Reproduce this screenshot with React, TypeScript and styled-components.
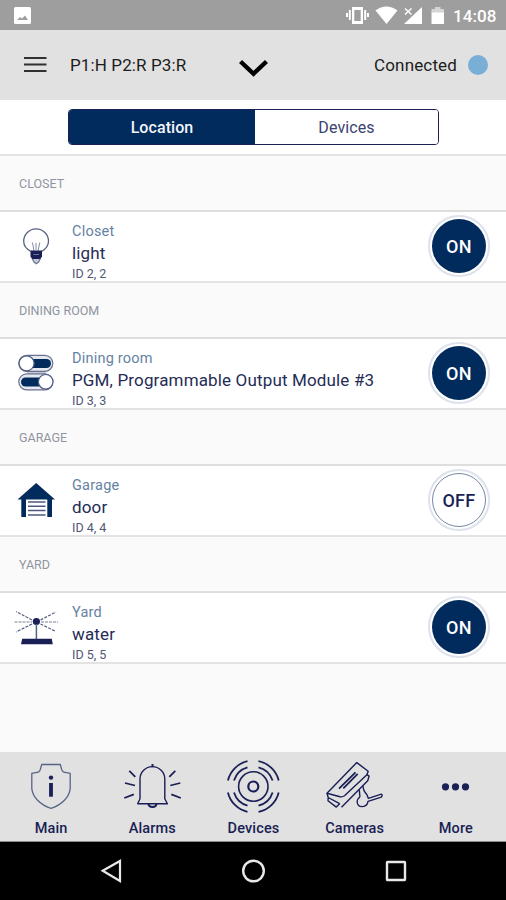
import React from 'react';
import styled, { createGlobalStyle } from 'styled-components';

const NAVY = '#002b5c';
const INK = '#1a1f55';

const GlobalStyle = createGlobalStyle`
  * { box-sizing: border-box; }
  body { margin: 0; background: #fafafa; font-family: Roboto, "Liberation Sans", sans-serif; }
  svg { display: block; flex: none; }
`;

const Screen = styled.div`
  width: 506px;
  height: 900px;
  display: flex;
  flex-direction: column;
  overflow: hidden;
  background: #fafafa;
`;

const StatusBar = styled.div`
  height: 30px;
  flex: none;
  display: flex;
  align-items: center;
  justify-content: space-between;
  padding: 0 9px 0 14px;
  background: #9e9e9e;
  color: #fff;
`;

const StatusIcons = styled.div`
  display: flex;
  align-items: center;
`;

const Clock = styled.span`
  width: 44px;
  margin-left: 7px;
  font-size: 17px;
  font-weight: 500;
  line-height: 30px;
  letter-spacing: 0.1px;
  white-space: nowrap;
  padding-top: 2px;
`;

const Header = styled.header`
  height: 70px;
  flex: none;
  display: grid;
  grid-template-columns: 70px 169px 30px 1fr 20px;
  align-items: center;
  padding-right: 18px;
  background: #e1e1e1;
  color: #1c1c1c;
`;

const Partitions = styled.span`
  font-size: 17px;
  letter-spacing: 0.12px;
`;

const Connection = styled.span`
  font-size: 17px;
  letter-spacing: 0.15px;
  text-align: right;
  padding-right: 11px;
`;

const StatusDot = styled.span`
  width: 20px;
  height: 20px;
  border-radius: 50%;
  background: #79aed6;
`;

const TabArea = styled.div`
  height: 54px;
  flex: none;
  padding: 9px 67px 0 68px;
  background: #fff;
`;

const Tabs = styled.div`
  height: 36px;
  display: grid;
  grid-template-columns: 186px 1fr;
  border: 1px solid ${INK};
  border-radius: 4px;
  overflow: hidden;
`;

const Tab = styled.button<{ $active?: boolean }>`
  border: 0;
  padding: 0;
  font: ${({ $active }) => ($active ? 500 : 400)} 16px Roboto, sans-serif;
  letter-spacing: ${({ $active }) => ($active ? '0.08px' : '0.1px')};
  color: ${({ $active }) => ($active ? '#f2f4fa' : '#3a4272')};
  background: ${({ $active }) => ($active ? NAVY : '#fff')};
`;

const List = styled.main`
  flex: 1;
`;

const SectionTitle = styled.h2`
  height: 56px;
  margin: 0;
  padding-left: 19px;
  border-top: 2px solid #e3e3e4;
  background: #fafafa;
  color: #8f959f;
  font-size: 12.5px;
  font-weight: 400;
  line-height: 55px;
`;

const DeviceRow = styled.div`
  height: 71px;
  display: grid;
  grid-template-columns: 72px 1fr 80px;
  border-top: 2px solid #dededf;
  background: #fff;
`;

const DeviceText = styled.div`
  display: flex;
  flex-direction: column;
  padding-top: 10px;
  white-space: nowrap;
`;

const Room = styled.span`
  font-size: 14.5px;
  line-height: 19px;
  letter-spacing: 0.22px;
  color: #6682a3;
`;

const DeviceName = styled.span`
  font-size: 17px;
  line-height: 24px;
  letter-spacing: 0.15px;
  color: #252c55;
`;

const DeviceId = styled.span`
  font-size: 12.5px;
  line-height: 17px;
  color: #505873;
`;

const Toggle = styled.button`
  width: 62px;
  height: 62px;
  margin: 3px 0 0 2px;
  padding: 2px;
  border: 2px solid #dde2ec;
  border-radius: 50%;
  background: #fff;
`;

const ToggleFace = styled.span<{ $on: boolean }>`
  display: flex;
  align-items: center;
  justify-content: center;
  width: 54px;
  height: 54px;
  border: ${({ $on }) => ($on ? '0' : '1.5px solid #7488a4')};
  border-radius: 50%;
  background: ${({ $on }) => ($on ? NAVY : '#fff')};
  color: ${({ $on }) => ($on ? '#fff' : INK)};
  font: 500 18px Roboto, sans-serif;
  letter-spacing: 0.3px;
  padding-top: 1px;
`;

const ListEnd = styled.div`
  border-top: 2px solid #e3e3e4;
`;

const BottomBar = styled.nav`
  height: 90px;
  flex: none;
  display: grid;
  grid-template-columns: repeat(5, 1fr);
  background: #e1e1e1;
  border-bottom: 1px solid #8c8c8c;
`;

const NavItem = styled.a`
  display: flex;
  flex-direction: column;
  align-items: center;
  color: ${INK};
`;

const NavLabel = styled.span`
  font-size: 14.5px;
  font-weight: 500;
  line-height: 20px;
  letter-spacing: 0.15px;
  padding-left: 1px;
`;

const SystemBar = styled.div`
  height: 58px;
  flex: none;
  display: grid;
  grid-template-columns: 40px repeat(3, 1fr) 39px;
  align-items: center;
  justify-items: center;
  background: #000;

  & > :first-child { grid-column: 2; }
`;

const RowIcon = ({ children }: { children: React.ReactNode }) => (
  <svg width="72" height="69" viewBox="0 0 72 69" fill="none" stroke={INK}>{children}</svg>
);

const Bulb = () => (
  <RowIcon>
    <path d="M31 39.5C26 37 23.7 34 23.7 29.3a12.4 12.4 0 0 1 24.8 0C48.5 34 46 37 41.5 39.5" stroke="#566384" strokeWidth="1.3" />
    <path d="M34 39L32.5 30.5M38 39L39.8 30.5M36 38v-7" stroke="#818aa5" />
    <path d="M32 46l2 4 2.2 1.8 2.4-1.8 2-4z" fill="#c4cad8" stroke="#6d7697" strokeWidth="1.2" />
    <path d="M30.5 38.5h11.5v6l-2 2.5h-7.5l-2-2.5z" fill={INK} stroke="none" />
    <path d="M33.5 42.5h5.5" stroke="#6d7697" />
  </RowIcon>
);

const Switches = () => (
  <RowIcon>
    <path d="M27 31.5h19v8H27z" fill="#c6c9d7" stroke="none" />
    <rect x="18.8" y="16.3" width="34" height="16" rx="8" fill="#e6e8ef" stroke="#69718f" strokeWidth="1.2" />
    <path d="M32 20h14.5a4 4 0 0 1 0 9H32z" fill={NAVY} stroke="none" />
    <circle cx="26.6" cy="24.3" r="7.5" fill="#fff" stroke="#505b80" strokeWidth="1.2" />
    <rect x="18.8" y="34.8" width="34" height="16" rx="8" fill="#e6e8ef" stroke="#69718f" strokeWidth="1.2" />
    <path d="M40 38.5H25.5a4 4 0 0 0 0 9H40z" fill={NAVY} stroke="none" />
    <circle cx="45.7" cy="42.8" r="7.3" fill="#fff" stroke="#505b80" strokeWidth="1.2" />
  </RowIcon>
);

const GarageIcon = () => (
  <RowIcon>
    <path d="M36.2 17L55 33.5h-3V51h-4.7V33.5H26V51h-4.7V33.5h-3.8z" fill={NAVY} stroke="none" />
    <path d="M28 36h17.5M28 40.3h17.5M28 44.6h17.5M28 49h17.5" stroke="#4d5880" strokeWidth="1.5" />
  </RowIcon>
);

const Sprinkler = () => (
  <RowIcon>
    <circle cx="36.4" cy="28.5" r="3.6" fill={INK} stroke="none" />
    <path d="M36.4 31v15" stroke="#4b6781" strokeWidth="1.5" />
    <path d="M21 51.3l1.2-5.5h29.6l1 5.5z" fill={INK} stroke="none" />
    <path d="M32 27L16 18.5M32 31L16 39M40.5 27L56 19M40.5 31L56 38.5" stroke="#555d80" strokeDasharray="3 1.3" strokeWidth="1.2" />
    <path d="M14.5 29H32M41 29h17" stroke="#a5acbb" strokeDasharray="3 1" strokeWidth="1.6" />
  </RowIcon>
);

const NavIcon = ({ children }: { children: React.ReactNode }) => (
  <svg width="70" height="67" viewBox="0 0 70 67" fill="none" stroke={INK} strokeWidth="1.4" strokeLinejoin="round">{children}</svg>
);

const Shield = () => (
  <NavIcon>
    <path d="M25.7 12.5h18.6l1.2 4.3q.8 3.7 5 3.9l3.7.6v15.2C53.5 45 46 52.5 35 56.4 24 52.5 16.5 45 15.8 36.5V21.3l3.7-.6q4.2-.2 5-3.9z" stroke="#586487" strokeWidth="1.3" />
    <circle cx="35" cy="25.6" r="2.2" fill={INK} stroke="none" />
    <path d="M35 31v13.7" strokeWidth="3.8" />
  </NavIcon>
);

const Bell = () => (
  <NavIcon>
    <path d="M20.7 51.8l2.3-5V27a12 12 0 0 1 24.8 0v19.8l2.6 5z" />
    <path d="M35.5 12v3.2" strokeWidth="2" />
    <path d="M31.5 52c.5 4 7.5 4 8 0" strokeWidth="2" />
    <path d="M12.3 18.8l6 6M8 31l10 2.5M7.3 46l9.5-3.7M58.3 18.8l-6 6M63.3 31l-10 2.5M63.8 46l-9.5-3.7" strokeWidth="1.8" />
  </NavIcon>
);

const Waves = () => (
  <NavIcon>
    <circle cx="35.3" cy="34.5" r="5" strokeWidth="2.2" />
    <circle cx="35.3" cy="34.5" r="14.7" strokeWidth="1.6" />
    <path d="M16 28.5A20 20 0 0 1 29.5 15.3M40.5 15.3A20 20 0 0 1 54.6 28.5M54.6 40.5A20 20 0 0 1 40.5 53.7M29.5 53.7A20 20 0 0 1 16 40.5M9.9 28.5A26 26 0 0 1 29.5 9.2M40.5 9.2A26 26 0 0 1 60.7 28.5M60.7 40.5A26 26 0 0 1 40.5 59.8M29.5 59.8A26 26 0 0 1 9.9 40.5" strokeWidth="1.8" />
  </NavIcon>
);

const Camera = () => (
  <NavIcon>
    <path d="M8 41.3L37.8 10.6l11.4 8.6-1.3 3.5L25.5 43.8q-2 1.4-4.5.9z" />
    <path d="M8 41.3l1.2 4.2 11.4 6.2M9.2 45.5l-.2 3.2 8.3 6.4 3.6-3.6M47.9 22.7l2.2 1.5-1.4 4.6L22.5 55.2" />
    <path d="M20 36.7L36.5 20.3M24.3 36.4l14.4-14.5" strokeWidth="1.8" />
    <path d="M40.3 37.8l.6 7.2M44 33.8q0 5 3.8 8.6l1.6 4 12.9-4.2q1.8.7 0 3l-13.3 4.2c-1 6.8-10.2 6.8-10.8.8-.2-2.1.9-3.9 2.7-5.2" />
  </NavIcon>
);

const More = () => (
  <NavIcon>
    <g fill={INK} stroke="none">
      <circle cx="25.5" cy="34.8" r="3.6" /><circle cx="35.5" cy="34.8" r="3.6" /><circle cx="45.5" cy="34.8" r="3.6" />
    </g>
  </NavIcon>
);

const devices = [
  { section: 'CLOSET', room: 'Closet', name: 'light', id: 'ID 2, 2', on: true, Icon: Bulb },
  { section: 'DINING ROOM', room: 'Dining room', name: 'PGM, Programmable Output Module #3', id: 'ID 3, 3', on: true, Icon: Switches },
  { section: 'GARAGE', room: 'Garage', name: 'door', id: 'ID 4, 4', on: false, Icon: GarageIcon },
  { section: 'YARD', room: 'Yard', name: 'water', id: 'ID 5, 5', on: true, Icon: Sprinkler },
];

const navItems = [
  { label: 'Main', Icon: Shield },
  { label: 'Alarms', Icon: Bell },
  { label: 'Devices', Icon: Waves },
  { label: 'Cameras', Icon: Camera },
  { label: 'More', Icon: More },
];

export default function App() {
  return (
    <>
      <GlobalStyle />
      <Screen>
        <StatusBar>
          <svg width="17" height="30" viewBox="0 0 17 30">
            <rect y="7" width="17" height="17" rx="1.5" fill="#fff" />
            <path d="M3 20l3-3 2 1.5 3-3 3 4.5z" fill="#9e9e9e" />
          </svg>
          <StatusIcons>
            <svg width="100" height="30" viewBox="0 0 100 30" fill="#fff">
              <path d="M6 7h11v17H6zM8.3 10v11h6.4V10z" fillRule="evenodd" />
              <path d="M3.8 10v10M1 13v4M19.2 10v10M22 13v4" stroke="#fff" strokeWidth="2" />
              <path d="M29.5 10.5q10.8-8 22 0L40.5 24z" />
              <path d="M76 7v17H58z" />
              <path d="M58 7l9 9h-9z" fill="#9e9e9e" />
              <path d="M59 8.5l6.5 6M65.5 8.5l-6.5 6" stroke="#fff" strokeWidth="1.5" />
              <path d="M85.5 12H98v12H85.5z" />
              <path d="M89 7h5.5v2H98v3.5H85.5V9H89z" fill="#d5d5d5" />
            </svg>
            <Clock>14:08</Clock>
          </StatusIcons>
        </StatusBar>
        <Header>
          <svg width="70" height="70" viewBox="0 0 70 70" stroke="#303030" strokeWidth="2">
            <path d="M24 28h22.5M24 34.5h22.5M24 41h22.5" />
          </svg>
          <Partitions>P1:H P2:R P3:R</Partitions>
          <svg width="30" height="70" viewBox="0 0 30 70" fill="none" stroke="#000" strokeWidth="4.4">
            <path d="M1.5 31.5l13 12.3 13-12.3" />
          </svg>
          <Connection>Connected</Connection>
          <StatusDot />
        </Header>
        <TabArea>
          <Tabs>
            <Tab $active>Location</Tab>
            <Tab>Devices</Tab>
          </Tabs>
        </TabArea>
        <List>
          {devices.map(({ section, room, name, id, on, Icon }) => (
            <React.Fragment key={section}>
              <SectionTitle>{section}</SectionTitle>
              <DeviceRow>
                <Icon />
                <DeviceText>
                  <Room>{room}</Room>
                  <DeviceName>{name}</DeviceName>
                  <DeviceId>{id}</DeviceId>
                </DeviceText>
                <Toggle><ToggleFace $on={on}>{on ? 'ON' : 'OFF'}</ToggleFace></Toggle>
              </DeviceRow>
            </React.Fragment>
          ))}
          <ListEnd />
        </List>
        <BottomBar>
          {navItems.map(({ label, Icon }) => (
            <NavItem key={label}>
              <Icon />
              <NavLabel>{label}</NavLabel>
            </NavItem>
          ))}
        </BottomBar>
        <SystemBar>
          <svg width="26" height="26" viewBox="0 0 26 26" fill="none" stroke="#e8e8e8" strokeWidth="2.2"><path d="M4.7 12.8L22 3v20z" /></svg>
          <svg width="26" height="26" viewBox="0 0 26 26" fill="none" stroke="#e8e8e8" strokeWidth="2.4"><circle cx="13.5" cy="13" r="10.3" /></svg>
          <svg width="26" height="26" viewBox="0 0 26 26" fill="none" stroke="#e8e8e8" strokeWidth="2.4"><rect x="4" y="4" width="18" height="18" rx="0.5" /></svg>
        </SystemBar>
      </Screen>
    </>
  );
}
